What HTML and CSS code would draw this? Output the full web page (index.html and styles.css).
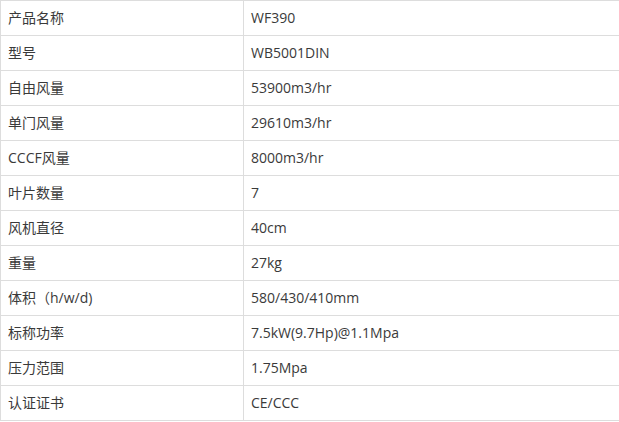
FILE: index.html
```html
<!DOCTYPE html>
<html lang="zh">
<head>
<meta charset="utf-8">
<link rel="stylesheet" href="styles.css">
</head>
<body>
<table class="spec">
<tbody>
<tr><td class="k">产品名称</td><td>WF390</td></tr>
<tr><td class="k">型号</td><td>WB5001DIN</td></tr>
<tr><td class="k">自由风量</td><td>53900m3/hr</td></tr>
<tr><td class="k">单门风量</td><td>29610m3/hr</td></tr>
<tr><td class="k">CCCF风量</td><td>8000m3/hr</td></tr>
<tr><td class="k">叶片数量</td><td>7</td></tr>
<tr><td class="k">风机直径</td><td>40cm</td></tr>
<tr><td class="k">重量</td><td>27kg</td></tr>
<tr><td class="k">体积（h/w/d)</td><td>580/430/410mm</td></tr>
<tr><td class="k">标称功率</td><td>7.5kW(9.7Hp)@1.1Mpa</td></tr>
<tr><td class="k">压力范围</td><td>1.75Mpa</td></tr>
<tr><td class="k">认证证书</td><td>CE/CCC</td></tr>
</tbody>
</table>
</body>
</html>
```
FILE: styles.css
```css
html, body {
  margin: 0;
  padding: 0;
  background: #fff;
}
.spec {
  border-collapse: collapse;
  width: 620px;
  table-layout: fixed;
  font-family: "Open Sans", "Noto Sans CJK SC", sans-serif;
  font-size: 14px;
  color: #3a3a3a;
}
.spec td {
  border: 1px solid #ddd;
  height: 35px;
  padding: 0 7px;
  box-sizing: border-box;
  vertical-align: middle;
  line-height: 20px;
}
.spec td.k {
  width: 243px;
}
```
